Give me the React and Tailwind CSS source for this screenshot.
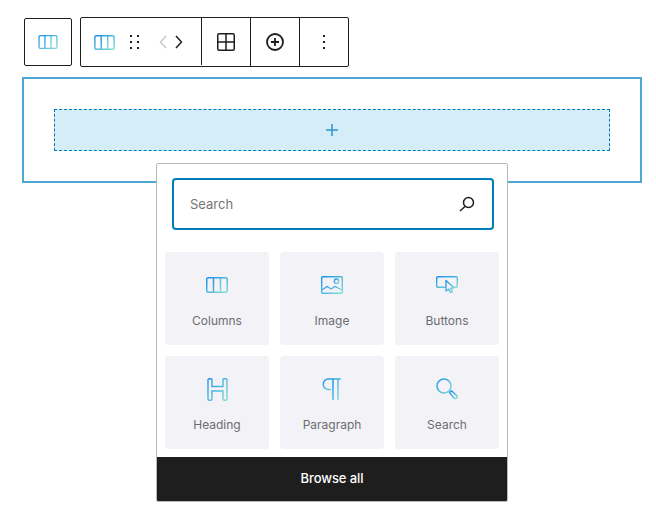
import React from 'react';

// shared gradient for the blue block icons
const Grad = ({ id }) => (
  <defs>
    <linearGradient id={id} x1="0" y1="0" x2="1" y2="1">
      <stop offset="0" stopColor="#1b93ea" />
      <stop offset="1" stopColor="#84dcd2" />
    </linearGradient>
  </defs>
);

const ColumnsIcon = ({ id, w = 22, h = 16 }) => (
  <svg width={w} height={h} viewBox="0 0 22 16" fill="none">
    <Grad id={id} />
    <rect x="0.75" y="0.75" width="20.5" height="14.5" rx="1.5" stroke={`url(#${id})`} strokeWidth="1.5" />
    <path d="M7.5 1v14M14.5 1v14" stroke={`url(#${id})`} strokeWidth="1.5" />
  </svg>
);

const ImageIcon = () => (
  <svg width="22" height="18" viewBox="0 0 22 18" fill="none">
    <Grad id="g-image" />
    <rect x="0.7" y="0.7" width="20.6" height="16.6" rx="1" stroke="url(#g-image)" strokeWidth="1.4" />
    <circle cx="15.5" cy="5.2" r="2.2" stroke="url(#g-image)" strokeWidth="1.3" />
    <path d="M1 14l5-3.5 4 2.5 4-2.5 7 3.5" stroke="url(#g-image)" strokeWidth="1.3" />
  </svg>
);

const ButtonsIcon = () => (
  <svg width="22" height="18" viewBox="0 0 22 18" fill="none">
    <Grad id="g-buttons" />
    <path d="M10 11.3H2A1.3 1.3 0 0 1 .7 10V2A1.3 1.3 0 0 1 2 .7h18A1.3 1.3 0 0 1 21.3 2v8a1.3 1.3 0 0 1-1.3 1.3h-1.5" stroke="url(#g-buttons)" strokeWidth="1.4" />
    <path d="M10 4.5l8 7.3-3.2.4 1.6 3.4-2 1-1.7-3.5-2.7 2z" fill="#f3f3f7" stroke="url(#g-buttons)" strokeWidth="1.3" strokeLinejoin="round" />
  </svg>
);

const HeadingIcon = () => (
  <svg width="21" height="23" viewBox="0 0 21 23" fill="none">
    <Grad id="g-heading" />
    <path d="M1 2a1.2 1.2 0 0 1 1.2-1.2h1.6A1.2 1.2 0 0 1 5 2v6.5h11V2a1.2 1.2 0 0 1 1.2-1.2h1.6A1.2 1.2 0 0 1 20 2v19a1.2 1.2 0 0 1-1.2 1.2h-1.6A1.2 1.2 0 0 1 16 21v-8H5v8a1.2 1.2 0 0 1-1.2 1.2H2.2A1.2 1.2 0 0 1 1 21z" stroke="url(#g-heading)" strokeWidth="1.4" />
  </svg>
);

const ParagraphIcon = () => (
  <svg width="20" height="22" viewBox="0 0 20 22" fill="none">
    <Grad id="g-para" />
    <path d="M19 1H6.5a5 5 0 0 0 0 10.5H9" stroke="url(#g-para)" strokeWidth="1.5" />
    <path d="M11 1v21M16 1v21" stroke="url(#g-para)" strokeWidth="1.5" />
  </svg>
);

const SearchBlockIcon = () => (
  <svg width="22" height="22" viewBox="0 0 22 22" fill="none">
    <Grad id="g-search" />
    <circle cx="8" cy="8" r="7" stroke="url(#g-search)" strokeWidth="1.5" />
    <path d="M13.5 14.5l2-1.6 5 4.4a1.8 1.8 0 0 1-2.5 2.8z" stroke="url(#g-search)" strokeWidth="1.5" strokeLinejoin="round" />
  </svg>
);

const ToolBtn = ({ children, short = false }) => (
  <div className="relative w-[49px] h-full flex items-center justify-center">
    <span className={`absolute left-0 top-0 w-px bg-[#1e1e1e] ${short ? 'h-[47px]' : 'h-full'}`} />
    {children}
  </div>
);

const blocks = [
  { label: 'Columns', icon: <ColumnsIcon id="g-col-tile" /> },
  { label: 'Image', icon: <ImageIcon /> },
  { label: 'Buttons', icon: <ButtonsIcon /> },
  { label: 'Heading', icon: <HeadingIcon /> },
  { label: 'Paragraph', icon: <ParagraphIcon /> },
  { label: 'Search', icon: <SearchBlockIcon /> },
];

export default function App() {
  return (
    <div className="relative w-[656px] h-[521px] bg-white overflow-hidden font-['Inter',sans-serif]">
      {/* block toolbar */}
      <div className="flex items-center gap-2 pt-[17px] pl-6">
        <div className="w-12 h-12 flex items-center justify-center border border-[#1e1e1e] rounded-[2px]">
          <ColumnsIcon id="g-col-a" w={20} h={14} />
        </div>
        <div className="h-[50px] w-[269px] flex items-stretch border border-[#1e1e1e] rounded-[2px]">
          <div className="w-[120px] flex items-center">
            <div className="ml-[13px] flex">
              <ColumnsIcon id="g-col-b" w={21} h={15} />
            </div>
            <svg className="ml-[15px]" width="10" height="15" viewBox="0 0 10 15" fill="#1e1e1e">
              <rect x="0" y="0" width="2" height="2" />
              <rect x="7" y="0" width="2" height="2" />
              <rect x="0" y="6" width="2" height="2" />
              <rect x="7" y="6" width="2" height="2" />
              <rect x="0" y="12" width="2" height="2" />
              <rect x="7" y="12" width="2" height="2" />
            </svg>
            <svg className="ml-[19px]" width="24" height="16" viewBox="0 0 24 16" fill="none" strokeWidth="1.5">
              <path d="M7 2L1.5 8 7 14" stroke="#c8c8c8" />
              <path d="M17 2l5.5 6-5.5 6" stroke="#1e1e1e" />
            </svg>
          </div>
          <ToolBtn short>
            <svg width="18" height="18" viewBox="0 0 18 18" fill="none" stroke="#1e1e1e" strokeWidth="1.5">
              <rect x="0.75" y="0.75" width="16.5" height="16.5" rx="1.5" />
              <path d="M9 1v16M1 9h16" />
            </svg>
          </ToolBtn>
          <ToolBtn>
            <svg width="18" height="18" viewBox="0 0 18 18" fill="none" stroke="#1e1e1e" strokeWidth="1.8">
              <circle cx="9" cy="9" r="8" />
              <path d="M9 5v8M5 9h8" />
            </svg>
          </ToolBtn>
          <ToolBtn>
            <svg width="4" height="16" viewBox="0 0 4 16" fill="#1e1e1e">
              <rect x="1" y="1" width="2" height="2" />
              <rect x="1" y="7" width="2" height="2" />
              <rect x="1" y="13" width="2" height="2" />
            </svg>
          </ToolBtn>
        </div>
      </div>

      {/* selected block with appender */}
      <div className="ml-[22px] mt-[10px] w-[620px] h-[106px] border-2 border-[#4fa8d2] p-[30px]">
        <div className="h-[42px] bg-[#d5edf7] border border-dashed border-[#007cba] flex items-center justify-center">
          <svg width="14" height="14" viewBox="0 0 14 14" fill="none" stroke="#2f94c8" strokeWidth="1.5">
            <path d="M7 1v12M1 7h12" />
          </svg>
        </div>
      </div>

      {/* inserter popover */}
      <div className="absolute left-[156px] top-[163px] w-[352px] h-[339px] bg-white border border-[#b8b8b8] rounded-[2px] flex flex-col overflow-hidden">
        <div className="ml-[15px] mr-[13px] mt-[14px] h-[52px] border-2 border-[#007cba] rounded-[4px] flex items-center justify-between pl-4 pr-[17px]">
          <span className="pt-px text-[13px] text-[#757575]">Search</span>
          <svg width="16" height="16" viewBox="0 0 16 16" fill="none" stroke="#1e1e1e" strokeWidth="1.5">
            <circle cx="9.5" cy="6.5" r="5" />
            <path d="M6 10.5L1 15" />
          </svg>
        </div>
        <div className="grid grid-cols-[104px_104px_104px] gap-x-[11px] gap-y-[11px] ml-2 mt-[22px]">
          {blocks.map((b) => (
            <div key={b.label} className="h-[93px] bg-[#f3f3f7] rounded-[4px] flex flex-col items-center">
              <div className="h-[61px] pt-[5px] flex items-center justify-center">{b.icon}</div>
              <span className="text-[12px] leading-4 text-[#6c6c70]">{b.label}</span>
            </div>
          ))}
        </div>
        <div className="mt-auto h-[44px] bg-[#1e1e1e] flex items-center justify-center text-[13px] tracking-[-0.1px] font-medium text-white">
          Browse all
        </div>
      </div>
    </div>
  );
}
